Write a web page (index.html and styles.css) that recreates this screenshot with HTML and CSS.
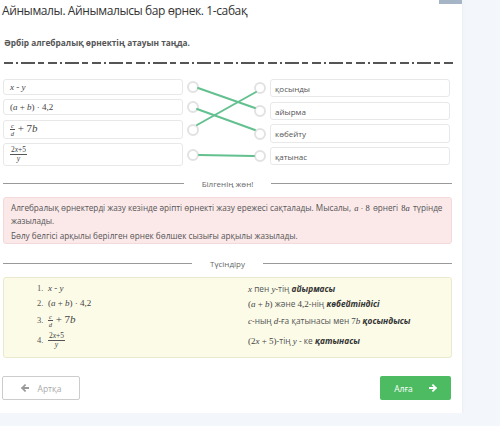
FILE: index.html
```html
<!DOCTYPE html>
<html lang="kk">
<head>
    <meta charset="UTF-8">
    <meta name="viewport" content="width=device-width, initial-scale=1.0">
    <title>Айнымалы. Айнымалысы бар өрнек</title>
    <link rel="stylesheet" href="styles.css">
</head>
<body>
    <div class="card">
        <span class="corner"></span>
        <h1 class="title">Айнымалы. Айнымалысы бар өрнек. 1-сабақ</h1>
        <p class="task">Әрбір алгебралық өрнектің атауын таңда.</p>
        <div class="cut"></div>

        <!-- Matching -->
        <div class="match">
            <div class="col col-left">
                <div class="item h16"><div class="box"><span class="m"><i>x</i> - <i>y</i></span></div><span class="dot"></span></div>
                <div class="item h16"><div class="box"><span class="m">(<i>a</i> + <i>b</i>) · 4,2</span></div><span class="dot"></span></div>
                <div class="item h19"><div class="box"><span class="m big"><span class="frac"><i>c</i><i>d</i></span> + 7<i>b</i></span></div><span class="dot"></span></div>
                <div class="item h23"><div class="box"><span class="m"><span class="frac wide"><span>2<i>x</i>+5</span><i>y</i></span></span></div><span class="dot"></span></div>
            </div>
            <div class="col col-right">
                <div class="item h18"><span class="dot"></span><div class="box">қосынды</div></div>
                <div class="item h18"><span class="dot"></span><div class="box">айырма</div></div>
                <div class="item h19"><span class="dot"></span><div class="box">көбейту</div></div>
                <div class="item h18"><span class="dot"></span><div class="box">қатынас</div></div>
            </div>
            <svg class="links" width="449" height="87" viewBox="0 0 449 87">
                <line x1="195" y1="9" x2="252" y2="29"/>
                <line x1="194" y1="30" x2="252" y2="51"/>
                <line x1="194" y1="46" x2="253" y2="13"/>
                <line x1="196" y1="76" x2="251" y2="77"/>
            </svg>
        </div>

        <div class="divider"><span>Білгенің жөн!</span></div>
        <div class="note">
            <p>Алгебралық өрнектерді жазу кезінде әріпті өрнекті жазу ережесі сақталады. Мысалы, <span class="m"><i>a</i> · 8</span> өрнегі <span class="m">8<i>a</i></span> түрінде<br>жазылады.</p>
            <p class="second">Бөлу белгісі арқылы берілген өрнек бөлшек сызығы арқылы жазылады.</p>
        </div>

        <div class="divider"><span>Түсіндіру</span></div>
        <div class="explain">
            <div class="ex-row r1">
                <div class="ex-left"><span class="num">1.</span><span class="m"><i>x</i> - <i>y</i></span></div>
                <div class="ex-right"><span class="m"><i>x</i></span> пен <span class="m"><i>y</i></span>-тің <b>айырмасы</b></div>
            </div>
            <div class="ex-row r2">
                <div class="ex-left"><span class="num">2.</span><span class="m">(<i>a</i> + <i>b</i>) · 4,2</span></div>
                <div class="ex-right"><span class="m">(<i>a</i> + <i>b</i>)</span> және <span class="m">4,2</span>-нің <b>көбейтіндісі</b></div>
            </div>
            <div class="ex-row r3">
                <div class="ex-left"><span class="num">3.</span><span class="m big"><span class="frac"><i>c</i><i>d</i></span> + 7<i>b</i></span></div>
                <div class="ex-right"><span class="m"><i>c</i></span>-ның <span class="m"><i>d</i></span>-ға қатынасы мен <span class="m">7<i>b</i></span> <b>қосындысы</b></div>
            </div>
            <div class="ex-row r4">
                <div class="ex-left"><span class="num">4.</span><span class="m"><span class="frac wide"><span>2<i>x</i>+5</span><i>y</i></span></span></div>
                <div class="ex-right"><span class="m">(2<i>x</i> + 5)</span>-тің <span class="m"><i>y</i></span> - ке <b>қатынасы</b></div>
            </div>
        </div>

        <div class="nav">
            <button class="btn back">
                <svg width="8" height="8" viewBox="0 0 10 10"><path d="M5 1.5 L1.5 5 L5 8.5 M1.5 5 H9"/></svg>
                Артқа
            </button>
            <button class="btn next">
                Алға
                <svg width="8" height="8" viewBox="0 0 10 10"><path d="M5 1.5 L8.5 5 L5 8.5 M8.5 5 H1"/></svg>
            </button>
        </div>
    </div>
</body>
</html>
```

FILE: styles.css
```css
/* Reset */
* {
    margin: 0;
    padding: 0;
    box-sizing: border-box;
}

body {
    font-family: 'Open Sans', 'Liberation Sans', sans-serif;
    background-color: #f3f6fb;
    color: #555;
}

/* Card */
.card {
    position: relative;
    width: 462px;
    min-height: 413px;
    background-color: #fff;
    padding: 1px 10px 13px 3px;
    box-shadow: 0 2px 4px rgba(0, 0, 0, 0.06);
}

.corner {
    position: absolute;
    top: 0;
    right: 0;
    width: 23px;
    height: 4px;
    background-color: #a6b5c5;
}

.title {
    font-size: 12px;
    font-weight: 400;
    letter-spacing: -0.4px;
    line-height: 20px;
    color: #333;
    margin-left: -1px;
}

.task {
    margin-top: 16px;
    margin-left: 1px;
    font-size: 8.3px;
    font-weight: 700;
    line-height: 12px;
    color: #555;
}

.cut {
    margin-top: 13px;
    margin-left: 1px;
    width: 451px;
    height: 2px;
    background: repeating-linear-gradient(90deg,
        #555 0 9px, transparent 9px 12px,
        #555 12px 14px, transparent 14px 17px,
        #555 17px 31px, transparent 31px 34px,
        #555 34px 40px, transparent 40px 44px);
}

/* Math text */
.m {
    font-family: 'Liberation Serif', 'DejaVu Serif', serif;
    font-size: 9px;
    color: #444;
}

.m i {
    font-style: italic;
}

.m.big {
    font-size: 11px;
}

.frac {
    display: inline-flex;
    flex-direction: column;
    align-items: center;
    vertical-align: middle;
    font-size: 6.5px;
    line-height: 7px;
}

.frac.wide {
    font-size: 7.5px;
    line-height: 8px;
}

.frac > :first-child {
    border-bottom: 0.8px solid #555;
    padding: 0 1px;
}

/* Matching */
.match {
    position: relative;
    display: flex;
    gap: 55px;
    margin-top: 15px;
}

.col {
    display: flex;
    flex-direction: column;
    gap: 4px;
}

.col-left .item:nth-child(2),
.col-right .item:first-child {
    margin-bottom: 1px;
}

.item {
    display: flex;
    align-items: center;
    gap: 4px;
}

.h16 { height: 16px; }
.h18 { height: 18px; }
.h19 { height: 19px; }
.h23 { height: 23px; }

.box {
    width: 180px;
    height: 100%;
    display: flex;
    align-items: center;
    padding: 0 6px;
    border: 1px solid #e8e8e8;
    border-radius: 3px;
    font-size: 8px;
    color: #555;
}

.col-right .box {
    padding-left: 4px;
}

.dot {
    width: 12px;
    height: 12px;
    flex-shrink: 0;
    border: 2px solid #e2e2e2;
    border-radius: 50%;
    background-color: #fff;
}

.links {
    position: absolute;
    top: 0;
    left: 0;
    overflow: visible;
}

.links line {
    stroke: #63c08f;
    stroke-width: 2;
    stroke-linecap: round;
}

/* Divider */
.divider {
    display: flex;
    align-items: center;
    gap: 12px;
    height: 12px;
    margin-top: 11px;
    font-size: 8px;
    color: #666;
}

.divider::before,
.divider::after {
    content: "";
    flex: 1;
    height: 1px;
    background-color: #999;
}

.divider span {
    padding: 0 6px;
}

/* Note box */
.note {
    margin-top: 8px;
    padding: 3px 7px 1px;
    background-color: #fbe9ea;
    border: 1px solid #f3d9da;
    border-radius: 3px;
    font-size: 8.2px;
    line-height: 13px;
    color: #555;
}

.note .m {
    font-size: 8.5px;
    padding: 0 1px;
    line-height: 1;
}

.note .second {
    margin-top: 2px;
}

.note + .divider {
    margin-top: 13px;
}

/* Explanation */
.divider + .explain {
    margin-top: 8px;
}

.explain {
    padding: 3px 0 6px;
    background-color: #fbfbe8;
    border: 1px solid #e9e9cd;
    border-radius: 3px;
}

.ex-row {
    display: grid;
    grid-template-columns: 244px 1fr;
    align-items: center;
}

.r1 { height: 14px; }
.r2 { height: 16px; }
.r3 { height: 18px; }
.r4 { height: 22px; }

.ex-left {
    display: flex;
    align-items: center;
    padding-left: 33px;
}

.num {
    width: 11px;
    font-family: 'Liberation Serif', serif;
    font-size: 8.5px;
    color: #555;
}

.ex-right {
    font-size: 8.3px;
    color: #555;
}

.ex-right b {
    font-weight: 700;
    font-style: italic;
    color: #333;
}

/* Navigation */
.explain + .nav {
    margin-top: 18px;
}

.nav {
    display: flex;
    justify-content: space-between;
    padding-right: 1px;
}

.btn {
    display: flex;
    align-items: center;
    justify-content: center;
    height: 24px;
    border-radius: 2px;
    font-family: 'Open Sans', sans-serif;
    font-size: 8.5px;
    cursor: pointer;
}

.btn svg path {
    fill: none;
    stroke-width: 2.2;
    stroke-linecap: square;
}

.back {
    width: 78px;
    margin-left: -1px;
    gap: 9px;
    background-color: #fff;
    border: 1px solid #ccc;
    color: #aaa;
}

.back svg path {
    stroke: #999;
}

.next {
    width: 71px;
    gap: 16px;
    background-color: #4cbb62;
    border: none;
    color: #fff;
}

.next svg path {
    stroke: #fff;
}
```
